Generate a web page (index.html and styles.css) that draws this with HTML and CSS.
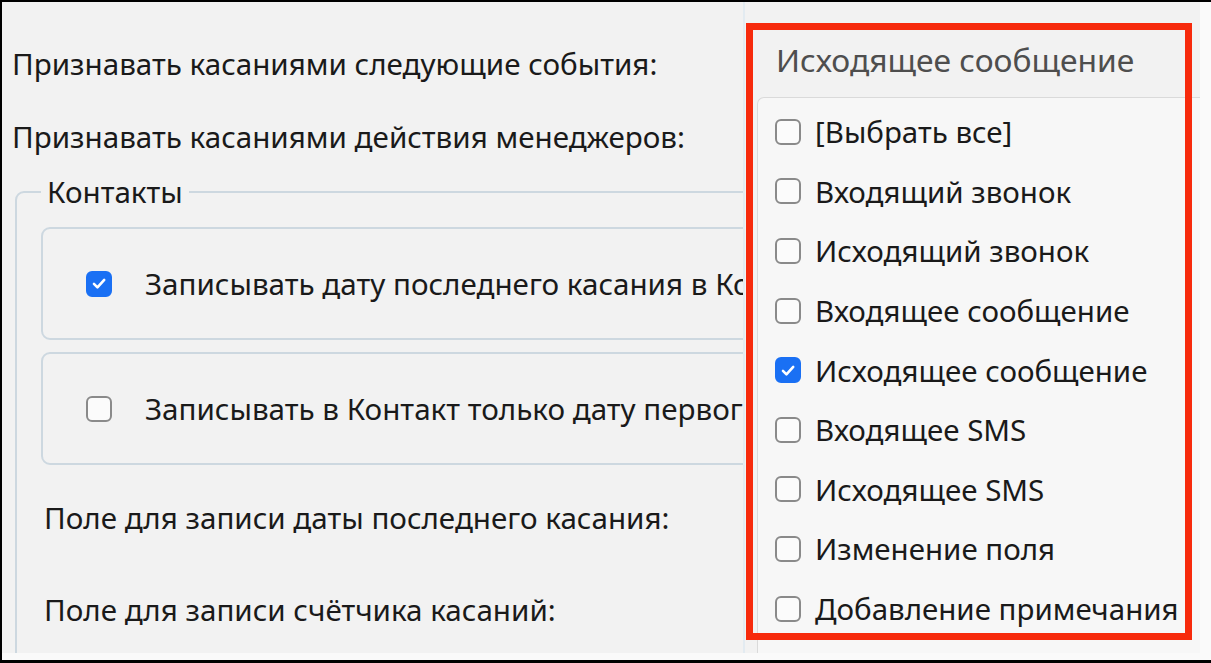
FILE: index.html
```html
<!DOCTYPE html>
<html lang="ru">
<head>
<meta charset="utf-8">
<title>Касания</title>
<link rel="stylesheet" href="styles.css">
</head>
<body>
<div class="frame">
  <div class="app">
    <div class="settings">
      <div class="line row-first">Признавать касаниями следующие события:</div>
      <div class="line row-second">Признавать касаниями действия менеджеров:</div>
      <fieldset class="group">
        <legend class="legend">Контакты</legend>
        <div class="option-box">
          <span class="check checked"><svg viewBox="0 0 24 24" width="24" height="24"><path d="M6.5 12.5l3.8 3.8 7.4-8.3" fill="none" stroke="#fff" stroke-width="2.8" stroke-linecap="round" stroke-linejoin="round"/></svg></span>
          <span class="option-text">Записывать дату последнего касания в Контакт</span>
        </div>
        <div class="option-box">
          <span class="check"></span>
          <span class="option-text">Записывать в Контакт только дату первого касания</span>
        </div>
        <div class="line field-label first-label">Поле для записи даты последнего касания:</div>
        <div class="line field-label second-label">Поле для записи счётчика касаний:</div>
      </fieldset>
    </div>

    <div class="dropdown">
      <div class="select-head">Исходящее сообщение</div>
      <ul class="select-list">
        <li class="item"><span class="check"></span>[Выбрать все]</li>
        <li class="item"><span class="check"></span>Входящий звонок</li>
        <li class="item"><span class="check"></span>Исходящий звонок</li>
        <li class="item"><span class="check"></span>Входящее сообщение</li>
        <li class="item"><span class="check checked"><svg viewBox="0 0 24 24" width="24" height="24"><path d="M6.5 12.5l3.8 3.8 7.4-8.3" fill="none" stroke="#fff" stroke-width="2.8" stroke-linecap="round" stroke-linejoin="round"/></svg></span>Исходящее сообщение</li>
        <li class="item"><span class="check"></span>Входящее SMS</li>
        <li class="item"><span class="check"></span>Исходящее SMS</li>
        <li class="item"><span class="check"></span>Изменение поля</li>
        <li class="item"><span class="check"></span>Добавление примечания</li>
      </ul>
    </div>

    <div class="highlight"></div>
  </div>
  <div class="edge"></div>
</div>
</body>
</html>
```

FILE: styles.css
```css
* { box-sizing: border-box; }

html, body {
  margin: 0;
  padding: 0;
  width: 1211px;
  height: 663px;
  overflow: hidden;
  background: #fafafa;
}

.frame {
  width: 1211px;
  height: 663px;
  border-top: 2px solid #000;
  border-left: 2px solid #000;
  border-bottom: 3px solid #000;
  display: flex;
  align-items: flex-start;
  background: #fafafa;
  font-family: "Noto Sans", "Open Sans", sans-serif;
  color: #1a1a1a;
}

.app {
  position: relative;
  width: 1198px;
  height: 651px;
  background: #f2f2f2;
  overflow: hidden;
  flex: none;
}

.edge {
  flex: 1;
}

.settings {
  width: 741px;
  height: 651px;
  overflow: hidden;
  padding: 42px 0 0 10px;
  font-size: 29.6px;
}

.line {
  height: 40px;
  line-height: 40px;
  white-space: nowrap;
}

.row-second {
  margin-top: 33px;
}

.group {
  margin: 15px 0 0 3px;
  padding: 0 0 0 24px;
  border: 2px solid #cdd8e0;
  border-radius: 9px 0 0 0;
  width: 1400px;
  height: 700px;
  min-width: 0;
}

.legend {
  padding: 0 6px;
  line-height: 40px;
}

.option-box {
  display: flex;
  align-items: center;
  height: 113px;
  margin-top: 15px;
  padding-left: 43px;
  border: 2px solid #cdd8e0;
  border-radius: 9px;
  white-space: nowrap;
}

.option-box + .option-box {
  margin-top: 12px;
}

.option-text {
  margin-left: 33px;
}

.check {
  flex: none;
  display: inline-flex;
  align-items: center;
  justify-content: center;
  width: 26px;
  height: 26px;
  border: 2px solid #8a8a8a;
  border-radius: 6px;
  background: #fbfbfb;
}

.check.checked {
  border-color: #1a70f4;
  background: #1a70f4;
}

.check svg {
  width: 23px;
  height: 23px;
}

.field-label {
  padding-left: 3px;
}

.first-label {
  margin-top: 33px;
}

.second-label {
  margin-top: 52px;
}

/* dropdown over the form */
.dropdown {
  position: absolute;
  left: 741px;
  top: 0;
  width: 470px;
  height: 700px;
  border-left: 2px solid #e3ebf1;
  background: #f2f2f2;
}

.select-head {
  height: 95px;
  padding: 36px 0 0 31px;
  font-size: 31.8px;
  line-height: 44px;
  color: #4e4e4e;
  white-space: nowrap;
}

.select-list {
  list-style: none;
  margin: 0 0 0 12px;
  padding: 4px 0 0 0;
  border-top: 1px solid #dadada;
  border-left: 1px solid #dadada;
  border-radius: 7px 0 0 0;
  background: #f7f7f7;
  height: 600px;
  font-size: 29.5px;
}

.item {
  display: flex;
  align-items: center;
  height: 59.6px;
  padding-left: 17px;
  white-space: nowrap;
}

.item .check {
  margin-right: 14px;
}

/* red annotation frame */
.highlight {
  position: absolute;
  left: 744px;
  top: 21px;
  width: 446px;
  height: 617px;
  border: 7px solid #f72a0c;
}
```
